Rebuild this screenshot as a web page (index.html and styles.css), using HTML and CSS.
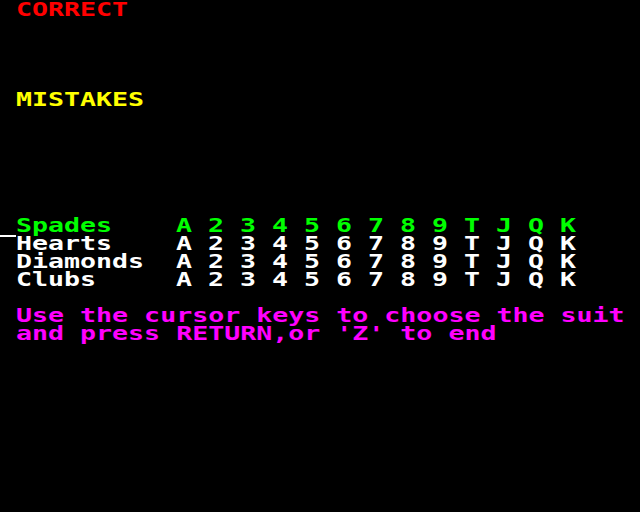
FILE: index.html
```html
<!DOCTYPE html>
<html lang="en">
<head>
<meta charset="utf-8">
<title>Cards</title>
<link rel="stylesheet" href="styles.css">
</head>
<body>
<main class="screen">
  <div class="line red"><span>CORRECT</span></div>
  <div class="line yellow gap4"><span>MISTAKES</span></div>

  <section class="suits gap6">
    <div class="suit green">
      <div class="cell"></div>
      <div class="cell"><span>Spades</span></div>
      <div class="cell"><span>A</span></div><div class="cell"><span>2</span></div><div class="cell"><span>3</span></div><div class="cell"><span>4</span></div><div class="cell"><span>5</span></div><div class="cell"><span>6</span></div><div class="cell"><span>7</span></div><div class="cell"><span>8</span></div><div class="cell"><span>9</span></div><div class="cell"><span>T</span></div><div class="cell"><span>J</span></div><div class="cell"><span>Q</span></div><div class="cell"><span>K</span></div>
    </div>
    <div class="suit white">
      <div class="cell marker"></div>
      <div class="cell"><span>Hearts</span></div>
      <div class="cell"><span>A</span></div><div class="cell"><span>2</span></div><div class="cell"><span>3</span></div><div class="cell"><span>4</span></div><div class="cell"><span>5</span></div><div class="cell"><span>6</span></div><div class="cell"><span>7</span></div><div class="cell"><span>8</span></div><div class="cell"><span>9</span></div><div class="cell"><span>T</span></div><div class="cell"><span>J</span></div><div class="cell"><span>Q</span></div><div class="cell"><span>K</span></div>
    </div>
    <div class="suit white">
      <div class="cell"></div>
      <div class="cell"><span>Diamonds</span></div>
      <div class="cell"><span>A</span></div><div class="cell"><span>2</span></div><div class="cell"><span>3</span></div><div class="cell"><span>4</span></div><div class="cell"><span>5</span></div><div class="cell"><span>6</span></div><div class="cell"><span>7</span></div><div class="cell"><span>8</span></div><div class="cell"><span>9</span></div><div class="cell"><span>T</span></div><div class="cell"><span>J</span></div><div class="cell"><span>Q</span></div><div class="cell"><span>K</span></div>
    </div>
    <div class="suit white">
      <div class="cell"></div>
      <div class="cell"><span>Clubs</span></div>
      <div class="cell"><span>A</span></div><div class="cell"><span>2</span></div><div class="cell"><span>3</span></div><div class="cell"><span>4</span></div><div class="cell"><span>5</span></div><div class="cell"><span>6</span></div><div class="cell"><span>7</span></div><div class="cell"><span>8</span></div><div class="cell"><span>9</span></div><div class="cell"><span>T</span></div><div class="cell"><span>J</span></div><div class="cell"><span>Q</span></div><div class="cell"><span>K</span></div>
    </div>
  </section>

  <div class="line magenta gap1"><span>Use the cursor keys to choose the suit</span></div>
  <div class="line magenta"><span>and press RETURN,or 'Z' to end</span></div>
</main>
</body>
</html>
```
FILE: styles.css
```css
html, body {
  margin: 0;
  padding: 0;
  background: #000;
}
body {
  width: 640px;
  height: 512px;
  overflow: hidden;
}
.screen {
  display: flex;
  flex-direction: column;
  font-family: "DejaVu Sans Mono", monospace;
  font-weight: bold;
  font-size: 19px;
  line-height: 18px;
}
.line {
  height: 18px;
  padding-left: 16px;
  white-space: pre;
}
.line > span,
.cell > span {
  display: inline-block;
  transform: scaleX(1.4);
  transform-origin: 0 0;
  white-space: pre;
}
.gap1 { margin-top: 18px; }
.gap4 { margin-top: 72px; }
.gap6 { margin-top: 108px; }

.suits {
  display: flex;
  flex-direction: column;
}
.suit {
  display: grid;
  grid-template-columns: 16px 160px repeat(13, 32px);
  height: 18px;
}
.cell {
  height: 18px;
  position: relative;
}
.marker::before {
  content: "";
  position: absolute;
  left: 0;
  top: 1px;
  width: 16px;
  height: 2px;
  background: #fff;
}

.red { color: #ff0000; }
.yellow { color: #ffff00; }
.green { color: #00ff00; }
.white { color: #ffffff; }
.magenta { color: #ff00ff; }
```
